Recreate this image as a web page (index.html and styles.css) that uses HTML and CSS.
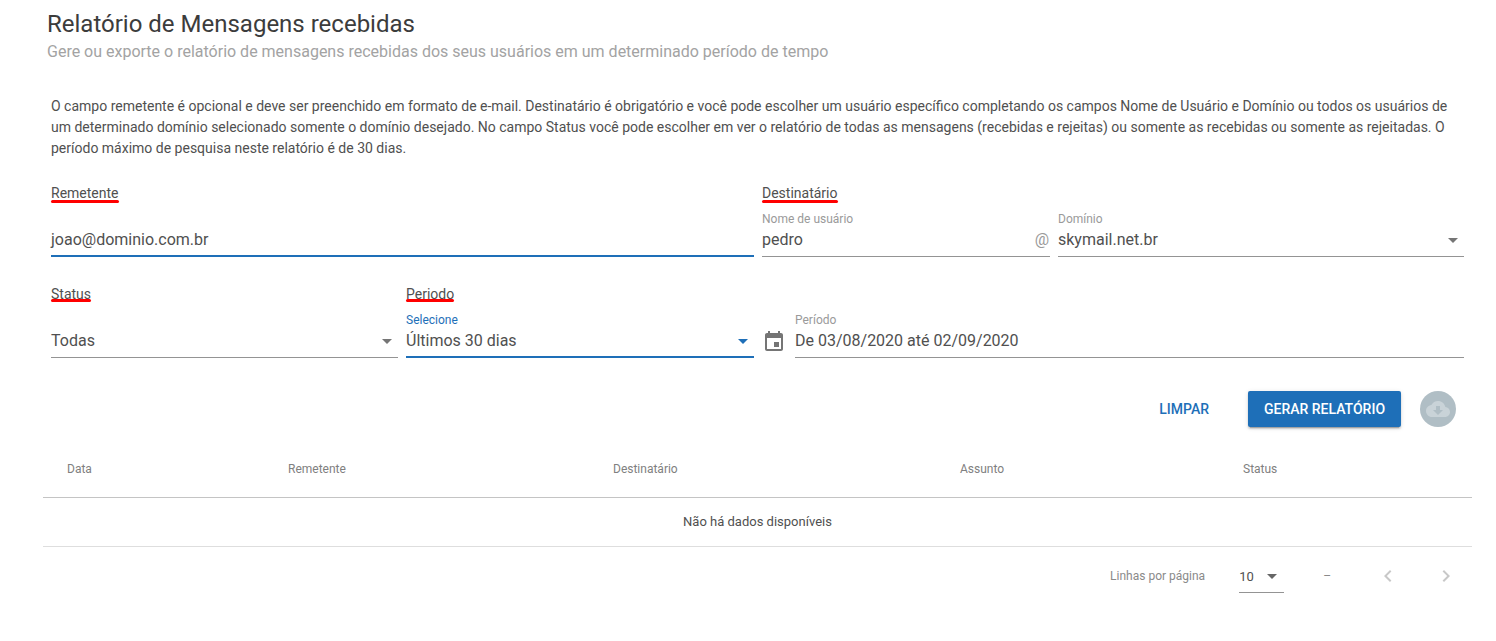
FILE: index.html
```html
<!DOCTYPE html>
<html lang="pt-BR">
<head>
<meta charset="utf-8">
<title>Relatório de Mensagens recebidas</title>
<link rel="stylesheet" href="styles.css">
</head>
<body>
<main class="page">
  <header class="head">
    <h1 class="title">Relatório de Mensagens recebidas</h1>
    <p class="subtitle">Gere ou exporte o relatório de mensagens recebidas dos seus usuários em um determinado período de tempo</p>
  </header>
  <section class="form">
    <p class="intro">O campo remetente é opcional e deve ser preenchido em formato de e-mail. Destinatário é obrigatório e você pode escolher um usuário específico completando os campos Nome de Usuário e Domínio ou todos os usuários de um determinado domínio selecionado somente o domínio desejado. No campo Status você pode escolher em ver o relatório de todas as mensagens (recebidas e rejeitas) ou somente as recebidas ou somente as rejeitadas. O período máximo de pesquisa neste relatório é de 30 dias.</p>
    <div class="row">
      <div class="col">
        <div class="section-label"><span class="mark">Remetente</span></div>
        <div class="field focused"><span class="float"></span><div class="value">joao@dominio.com.br</div></div>
      </div>
      <div class="col">
        <div class="section-label"><span class="mark">Destinatário</span></div>
        <div class="pair">
          <div class="field user"><span class="float">Nome de usuário</span><div class="value"><span class="grow">pedro</span><span class="at">@</span></div></div>
          <div class="field grow"><span class="float">Domínio</span><div class="value"><span class="grow">skymail.net.br</span><i class="caret"></i></div></div>
        </div>
      </div>
    </div>
    <div class="row second">
      <div class="col">
        <div class="pair">
          <div class="half narrow">
            <div class="section-label"><span class="mark">Status</span></div>
            <div class="field"><span class="float"></span><div class="value"><span class="grow">Todas</span><i class="caret"></i></div></div>
          </div>
          <div class="half">
            <div class="section-label"><span class="mark">Periodo</span></div>
            <div class="field focused"><span class="float blue">Selecione</span><div class="value"><span class="grow">Últimos 30 dias</span><i class="caret blue-caret"></i></div></div>
          </div>
        </div>
      </div>
      <div class="col period">
        <svg class="cal" viewBox="0 0 24 24" width="24" height="24" aria-hidden="true"><path d="M19 4h-1V2h-2v2H8V2H6v2H5c-1.1 0-2 .9-2 2v14c0 1.1.9 2 2 2h14c1.1 0 2-.9 2-2V6c0-1.1-.9-2-2-2zm0 16H5V9h14v11z"/><path d="M12 13h5v5h-5z"/></svg>
        <div class="field grow"><span class="float">Período</span><div class="value">De 03/08/2020 até 02/09/2020</div></div>
      </div>
    </div>
    <div class="actions">
      <button class="btn-text" type="button">LIMPAR</button>
      <button class="btn-primary" type="button">GERAR RELATÓRIO</button>
      <span class="btn-round">
        <svg viewBox="0 0 24 24" width="24" height="24" aria-hidden="true"><path d="M19.35 10.04C18.67 6.59 15.64 4 12 4 9.11 4 6.6 5.64 5.35 8.04 2.34 8.36 0 10.91 0 14c0 3.31 2.69 6 6 6h13c2.76 0 5-2.24 5-5 0-2.64-2.05-4.78-4.65-4.96zM17 13l-5 5-5-5h3V9h4v4h3z"/></svg>
      </span>
    </div>
  </section>
  <section class="table-wrap">
    <div class="t-row t-head">
      <span class="c1">Data</span><span class="c2">Remetente</span><span class="c3">Destinatário</span><span class="c4">Assunto</span><span class="c5">Status</span>
    </div>
    <div class="t-empty">Não há dados disponíveis</div>
    <div class="t-foot">
      <span class="per">Linhas por página</span>
      <span class="per-select"><span class="grow">10</span><i class="caret dark"></i></span>
      <span class="range">–</span>
      <svg class="chev first" viewBox="0 0 24 24" width="24" height="24" aria-hidden="true"><path d="M15.41 7.41 14 6l-6 6 6 6 1.41-1.41L10.83 12z"/></svg>
      <svg class="chev" viewBox="0 0 24 24" width="24" height="24" aria-hidden="true"><path d="M10 6 8.59 7.41 13.17 12l-4.58 4.59L10 18l6-6z"/></svg>
    </div>
  </section>
</main>
</body>
</html>
```
FILE: styles.css
```css
* { box-sizing: border-box; }
html, body { margin: 0; padding: 0; background: #fff; }
body { font-family: Roboto, "Liberation Sans", sans-serif; color: rgba(0,0,0,.87); overflow: hidden; }
.page { width: 1496px; height: 641px; }
.head { padding: 10px 0 0 47px; }
.title { margin: 0; font-size: 24px; line-height: 29px; font-weight: 400; color: #3c3c3c; }
.subtitle { margin: 1px 0 0; font-size: 16px; line-height: 24px; color: #a3a3a3; }
.form { padding: 0 32px 0 51px; }
.intro { margin: 32px 0 0; font-size: 14px; line-height: 21px; width: 1400px; color: #505050; }
.row { display: flex; gap: 8px; margin-top: 24px; }
.row.second { margin-top: 27px; }
.col { flex: 0 0 703px; }
.col:last-child { flex: 0 0 702px; }
.section-label { font-size: 14px; line-height: 20px; height: 23px; color: #505050; }
.mark { position: relative; display: inline-block; }
.mark::after { content: ""; position: absolute; left: 0; right: 0; top: 17px; height: 3px; border-radius: 2px; background: #f00; }
.second .mark::after { top: 15px; }
.pair { display: flex; gap: 8px; }
.half { flex: 1 1 0; }
.half.narrow { flex: 0 0 347px; }
.user { flex: 0 0 288px; }
.grow { flex: 1 1 auto; min-width: 0; }
.field { height: 51px; border-bottom: 1px solid #949494; display: flex; flex-direction: column; }
.field.focused { border-bottom: 2px solid #1e6fb8; }
.float { display: block; height: 21px; padding-top: 6px; font-size: 12px; line-height: 14px; color: #9a9a9a; }
.float.blue { color: #1e6fb8; }
.value { display: flex; align-items: center; height: 26px; font-size: 16px; line-height: 24px; color: #505050; }
.at { color: #9a9a9a; font-size: 16px; margin-right: 1px; }
.caret { flex: none; width: 0; height: 0; margin-right: 6px; border: 5px solid transparent; border-top-color: #757575; border-bottom-width: 0; }
.blue-caret { border-top-color: #1e6fb8; }
.dark { border-top-color: #666; margin-right: 0; }
.period { display: flex; align-items: flex-end; padding-top: 23px; }
.cal { flex: none; margin: 0 9px 5px 0; fill: #757575; }
.actions { display: flex; align-items: center; justify-content: flex-end; margin-top: 33px; padding-right: 8px; height: 36px; width: 1413px; }
.btn-text { border: 0; background: none; padding: 0; font: 500 14px Roboto, sans-serif; color: #1e6fb8; margin-right: 39px; }
.btn-primary { width: 153px; height: 36px; border: 0; border-radius: 2px; background: #1e6fb8; color: #fff; font: 500 14px Roboto, sans-serif; padding: 0; box-shadow: 0 3px 1px -2px rgba(0,0,0,.2), 0 2px 2px 0 rgba(0,0,0,.14), 0 1px 5px 0 rgba(0,0,0,.12); }
.btn-round { width: 36px; height: 36px; margin-left: 19px; border-radius: 50%; background: #b0bec5; display: flex; align-items: center; justify-content: center; fill: #c9d3d8; }
.table-wrap { margin: 23px 24px 0 43px; }
.t-row { display: flex; }
.t-head { height: 48px; padding-bottom: 10px; border-bottom: 1px solid #c4c4c4; align-items: center; font-size: 12px; font-weight: 400; color: #808080; }
.c1 { width: 245px; padding-left: 24px; }
.c2 { width: 325px; }
.c3 { width: 347px; }
.c4 { width: 283px; }
.t-empty { height: 49px; padding-bottom: 1px; display: flex; align-items: center; justify-content: center; font-size: 13px; color: #505050; border-bottom: 1px solid #dedede; }
.t-foot { display: flex; align-items: center; justify-content: flex-end; height: 58px; font-size: 12px; color: #8a8a8a; }
.per { margin-right: 34px; }
.per-select { display: flex; align-items: center; width: 45px; height: 32px; border-bottom: 1px solid #949494; font-size: 13px; color: #505050; padding-right: 7px; margin-top: 2px; }
.range { margin-left: 39px; margin-right: 45px; }
.chev { fill: #c8c8c8; margin-right: 34px; }
.chev:last-child { margin-right: 14px; }
```
